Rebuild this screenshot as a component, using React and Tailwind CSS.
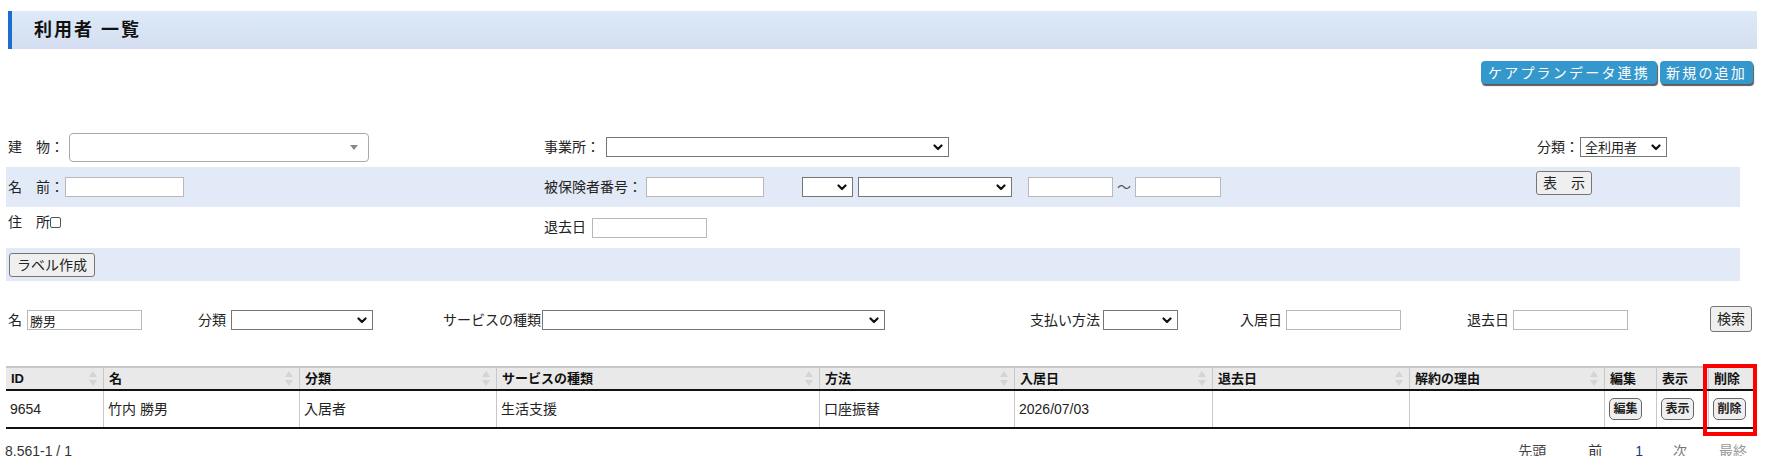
import React from 'react';

// chevron used by the plain select boxes
const Chevron = () => (
  <svg width="10" height="7" viewBox="0 0 10 7" className="shrink-0">
    <path d="M1.5 1.5 5 5l3.5-3.5" stroke="#111" strokeWidth="2.2" fill="none" strokeLinecap="round" strokeLinejoin="round" />
  </svg>
);

const Select = ({ className = '', value = '' }) => (
  <div className={`flex items-center justify-between h-[20px] border border-[#767676] bg-white pl-[4px] pr-[5px] text-[13px] leading-none ${className}`}>
    <span>{value}</span>
    <Chevron />
  </div>
);

const Input = ({ className = '', value = '' }) => (
  <input
    readOnly
    value={value}
    className={`h-[20px] border border-[#b8b8b8] bg-white px-[2px] text-[13px] outline-none ${className}`}
  />
);

const GrayButton = ({ className = '', children }) => (
  <button className={`h-[24px] px-[6px] border border-[#767676] rounded-[3px] bg-[#efefef] text-[14px] leading-none whitespace-nowrap ${className}`}>
    {children}
  </button>
);

const SortArrows = () => (
  <svg width="8" height="15" viewBox="0 0 8 15" className="shrink-0">
    <path d="M4 0 8 6H0z" fill="#d4d4d4" />
    <path d="M4 15 8 9H0z" fill="#d4d4d4" />
  </svg>
);

const columns = [
  { label: 'ID', w: 'w-[97px]', sort: true },
  { label: '名', w: 'w-[196px]', sort: true },
  { label: '分類', w: 'w-[197px]', sort: true },
  { label: 'サービスの種類', w: 'w-[323px]', sort: true },
  { label: '方法', w: 'w-[195px]', sort: true },
  { label: '入居日', w: 'w-[198px]', sort: true },
  { label: '退去日', w: 'w-[197px]', sort: true },
  { label: '解約の理由', w: 'w-[195px]', sort: true },
  { label: '編集', w: 'w-[52px]' },
  { label: '表示', w: 'w-[52px]' },
  { label: '削除', w: 'w-[48px]' },
];

const row = ['9654', '竹内 勝男', '入居者', '生活支援', '口座振替', '2026/07/03', '', ''];

const SmallButton = ({ children }) => (
  <button className="h-[22px] w-[33px] border border-[#666] rounded-[5px] bg-[#efefef] text-[12px] font-bold leading-none">
    {children}
  </button>
);

export default function App() {
  return (
    <div className='relative w-[1767px] h-[473px] overflow-hidden bg-white pt-[11px] text-[#222] font-["Liberation_Sans","Noto_Sans_CJK_JP",sans-serif]'>
      {/* page title */}
      <div className="ml-[8px] mr-[10px] h-[38px] flex items-center border-l-4 border-[#1c6fd1] bg-gradient-to-b from-[#dceaf9] to-[#d5def0] pl-[22px]">
        <h1 className="text-[18px] font-bold tracking-[2px] text-[#111]">利用者 一覧</h1>
      </div>

      {/* top actions */}
      <div className="mt-[12px] flex justify-end gap-[3px] pr-[14px]">
        <button className="h-[23px] px-[7px] rounded-[4px] bg-[#3498cc] text-white text-[14px] tracking-[2.2px] leading-none shadow-[1px_2px_1px_rgba(0,0,0,0.65)]">
          ケアプランデータ連携
        </button>
        <button className="h-[23px] px-[6px] rounded-[4px] bg-[#3498cc] text-white text-[14px] tracking-[2.2px] leading-none shadow-[1px_2px_1px_rgba(0,0,0,0.65)]">
          新規の追加
        </button>
      </div>

      {/* filter form */}
      <div className="mt-[43px] ml-[6px] w-[1734px] text-[14px]">
        <div className="grid grid-cols-[536px_993px_1fr] h-[40px] items-center">
          <div className="flex items-center pl-[2px]">
            <span>建　物：</span>
            <div className="ml-[5px] w-[300px] h-[29px] border border-[#aaa] rounded-[4px] bg-white flex items-center justify-end pr-[10px]">
              <svg width="8" height="5" viewBox="0 0 8 5"><path d="M0 0h8L4 5z" fill="#888" /></svg>
            </div>
          </div>
          <div className="flex items-center pl-[2px]">
            <span>事業所：</span>
            <Select className="ml-[6px] w-[343px]" />
          </div>
          <div className="flex items-center pl-[2px]">
            <span>分類：</span>
            <Select className="ml-[1px] w-[87px] h-[19px]" value="全利用者" />
          </div>
        </div>

        <div className="grid grid-cols-[536px_993px_1fr] h-[40px] bg-[#e3eaf7]">
          <div className="flex items-center pl-[2px]">
            <span>名　前：</span>
            <Input className="ml-[1px] w-[119px]" />
          </div>
          <div className="flex items-center pl-[2px]">
            <span>被保険者番号：</span>
            <Input className="ml-[4px] w-[118px]" />
            <Select className="ml-[38px] w-[51px]" />
            <Select className="ml-[5px] w-[154px]" />
            <Input className="ml-[16px] w-[85px]" />
            <span className="mx-[4px] text-[#555]">〜</span>
            <Input className="w-[86px]" />
          </div>
          <div className="flex items-start pt-[4px] pl-[1px]">
            <GrayButton className="w-[56px]">表　示</GrayButton>
          </div>
        </div>

        <div className="grid grid-cols-[536px_993px_1fr] h-[41px]">
          <div className="flex items-start pt-[5px] pl-[2px]">
            <span>住　所</span>
            <span className="mt-[5px] w-[11px] h-[11px] border border-[#555] rounded-[2px] bg-white" />
          </div>
          <div className="flex items-center pl-[2px]">
            <span>退去日</span>
            <Input className="ml-[6px] w-[115px] h-[19px]" />
          </div>
          <div />
        </div>

        <div className="h-[33px] bg-[#e3eaf7] flex items-center pl-[3px]">
          <GrayButton className="h-[23px] px-[7px]">ラベル作成</GrayButton>
        </div>
      </div>

      {/* search row */}
      <div className="mt-[22px] h-[34px] grid grid-cols-[190px_245px_587px_210px_227px_243px_1fr] items-center pl-[8px] text-[14px]">
        <div className="flex items-center">
          <span>名</span>
          <Input className="ml-[5px] w-[115px] h-[19px]" value="勝男" />
        </div>
        <div className="flex items-center">
          <span>分類</span>
          <Select className="ml-[5px] w-[142px]" />
        </div>
        <div className="flex items-center">
          <span>サービスの種類</span>
          <Select className="ml-[1px] w-[343px]" />
        </div>
        <div className="flex items-center">
          <span>支払い方法</span>
          <Select className="ml-[3px] w-[75px]" />
        </div>
        <div className="flex items-center">
          <span>入居日</span>
          <Input className="ml-[4px] w-[115px] h-[19px]" />
        </div>
        <div className="flex items-center">
          <span>退去日</span>
          <Input className="ml-[4px] w-[115px] h-[19px]" />
        </div>
        <div className="flex items-center">
          <GrayButton className="h-[26px] w-[42px] mb-[2px]">検索</GrayButton>
        </div>
      </div>

      {/* result table */}
      <div className="mt-[29px] ml-[6px] w-[1750px]">
        <div className="flex h-[25px] border-t-2 border-[#c8c8c8] border-b-2 border-b-[#111] bg-[#e9e9e9] text-[13px]">
          {columns.map((c, i) => (
            <div
              key={c.label}
              className={`${c.w} flex items-center justify-between pl-[5px] pr-[6px] font-bold text-[#111] ${i > 0 ? 'border-l border-[#c8c8c8]' : ''}`}
            >
              <span>{c.label}</span>
              {c.sort && <SortArrows />}
            </div>
          ))}
        </div>
        <div className="flex h-[38px] border-b-2 border-[#111] text-[14px]">
          {columns.map((c, i) => (
            <div
              key={c.label}
              className={`${c.w} flex items-center pl-[4px] ${i > 0 ? 'border-l border-[#c8c8c8]' : ''}`}
            >
              {i < row.length ? row[i] : <SmallButton>{c.label}</SmallButton>}
            </div>
          ))}
        </div>
      </div>

      {/* highlight around the delete column */}
      <div className="absolute left-[1703px] top-[364px] w-[54px] h-[72px] border-4 border-[#ff0000]" />

      {/* paging footer */}
      <div className="mt-[12px] h-[15px] overflow-hidden flex justify-between text-[14px] leading-[20px]">
        <span className="pl-[5px] text-[#333]">8,561-1 / 1</span>
        <div className="flex pr-[20px]">
          <span className="text-[#444]">先頭</span>
          <span className="ml-[42px] text-[#333]">前</span>
          <span className="ml-[33px] text-[#1a3c80]">1</span>
          <span className="ml-[30px] text-[#777]">次</span>
          <span className="ml-[32px] text-[#999]">最終</span>
        </div>
      </div>
    </div>
  );
}
